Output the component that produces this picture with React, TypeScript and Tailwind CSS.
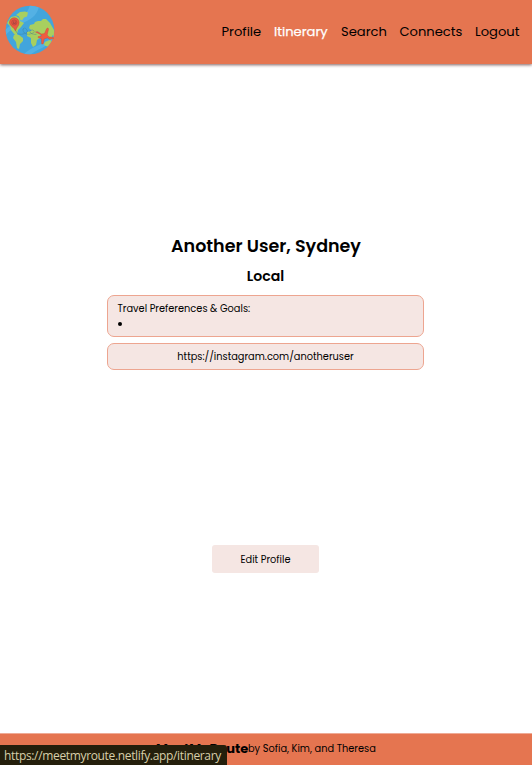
import React from "react";

const navItems = [
  { label: "Profile", style: "w-[39.5px]" },
  { label: "Itinerary", style: "w-[54px] text-white [-webkit-text-stroke:0.25px_white]" },
  { label: "Search", style: "w-[45.5px]" },
  { label: "Connects", style: "w-[62.5px]" },
  { label: "Logout", style: "w-[45px]" },
];

function GlobeLogo() {
  return (
    <svg className="ml-[5px] h-[50px] w-[50px]" viewBox="0 0 50 50" aria-label="MeetMyRoute">
      <defs>
        <clipPath id="globe">
          <circle cx="25" cy="25" r="24.3" />
        </clipPath>
      </defs>
      <circle cx="25" cy="25" r="24.3" fill="#42a5dc" />
      <g clipPath="url(#globe)">
        <path d="M25 0h9C33 9 28 13 20 17C11 21 5 25 0 31V25C10 16 22 12 25 0Z M18 50C26 41 42 39 50 29V33C43 42 32 44 25 50Z" fill="#54b1e4" />
        <path d="M2 18l4-6 5-1 3 2 1 3 4 2-3 4-3 3-1 4 2 2-4-1-4-5-1-4Z" fill="#a8cf5f" />
        <path d="M9 30l5 0 4 3 0 3-3 3-1 5-2-1-1-6-3-4Z" fill="#a8cf5f" />
        <path d="M11 10l4-3 5-.5 3 1-1 4-3 1-2 3-2-1-1-3Z" fill="#a8cf5f" />
        <path d="M24 23l1-3 4-1 1-2 3-1 3 0 2-2 3 0 4 4 4 7 0 6-3-1-1 3-3-1-2-4-2 3-3-1-1-3-4-1-2 1Z" fill="#a8cf5f" />
        <path d="M22 27l4-1 5 0 4 3 0 4-3 2-1 5-3 2-2-4 0-5-4-2Z" fill="#a8cf5f" />
        <path d="M40 37l5-2 3 2-3 5-4-1-2-1Z M45 29l2 0 0 4-2-1Z" fill="#a8cf5f" />
      </g>
      <path d="M11 26c0 2 3 4 7 3s5-2 4-4-4-3-4 0 4 5 7 4 5-1 4-3-5-1-4 1 4 3 7 2" fill="none" stroke="#3c748e" strokeWidth=".5" strokeDasharray="1 .45" />
      <path d="M10.5 26C9 22 4.5 21 4.5 17.5a4.8 4.8 0 0 1 9.6 0c0 3.5-2.5 4.5-3.6 8.5Z" fill="#e95a3f" stroke="#ab443a" strokeWidth=".4" />
      <circle cx="9.3" cy="17.5" r="2.6" fill="#df5340" stroke="#ad453c" strokeWidth=".6" />
      <path d="M8.5 16.5v2h1.8v-2" fill="none" stroke="#743c42" strokeWidth=".45" />
      <path d="M30.5 27l2-.3 4 2.3 3-.5 2-4.7c1-1.5 2.2-.7 2 .6l-1.3 5.6 2 2 4 .3 .4 1.3-4 .8-2.2-1.5-3.2 1-1 5-1.5 .2-.4-5.5-3.3-1 .2-1.1 3.1-.3.2-1.3Z" fill="#f05b40" stroke="#bf4938" strokeWidth=".35" />
    </svg>
  );
}

export default function App() {
  return (
    <div className="flex h-[765px] w-[532px] flex-col overflow-hidden bg-white font-['Poppins',sans-serif] text-black">
      <header className="z-10 flex h-[64px] shrink-0 items-start justify-between bg-[#e57550] pt-[5px] pr-[12px] shadow-[0_1px_3px_rgba(60,10,10,0.65)]">
        <GlobeLogo />
        <nav className="mt-[17px] flex gap-[13px] text-[13.1px] leading-5">
          {navItems.map(({ label, style }) => (
            <a key={label} className={`whitespace-nowrap ${style}`}>{label}</a>
          ))}
        </nav>
      </header>

      <main className="flex flex-1 flex-col items-center">
        <h1 className="mt-[169px] h-[26px] text-[17.5px] leading-[26px] font-semibold">Another User, Sydney</h1>
        <h2 className="mt-[6px] mr-px mb-[8px] h-[22px] text-[14.1px] leading-[22px] font-semibold">Local</h2>
        <section className="mr-px h-[42px] w-[317px] rounded-[7px] border border-[#eda590] bg-[#f5e6e3] px-[9.5px] pt-[5px] text-[9.8px] leading-4">
          <p>Travel Preferences &amp; Goals:</p>
          <ul className="flex h-[14px] items-center"><li className="h-[4px] w-[4px] rounded-full bg-black" /></ul>
        </section>
        <a className="mt-[6px] mr-px flex h-[27px] w-[317px] items-center justify-center rounded-[7px] border border-[#eda590] bg-[#f5e6e3] pt-[2px] text-[9.8px]">https://instagram.com/anotheruser</a>
        <button className="mt-[175px] mr-px h-[28px] w-[107px] rounded-[3px] bg-[#f5e6e3] pt-[2px] text-[9.8px]">Edit Profile</button>
      </main>

      <footer className="flex h-[32px] shrink-0 items-center border-t border-[#efab96] bg-[#e57550] pb-[2px] pl-[156px]">
        <strong className="w-[92px] whitespace-nowrap text-[13px] font-bold">MeetMyRoute</strong>
        <span className="pt-[2px] text-[9.8px]">by Sofia, Kim, and Theresa</span>
      </footer>
      <div className="fixed bottom-0 left-0 z-20 h-[20px] w-[227px] rounded-tr-[3px] bg-[#241f0c] pl-[4px] font-['Open_Sans',sans-serif] text-[12px] leading-[21px] tracking-[-0.34px] whitespace-nowrap text-[#d8cfaa]">
        https://meetmyroute.netlify.app/itinerary
      </div>
    </div>
  );
}
